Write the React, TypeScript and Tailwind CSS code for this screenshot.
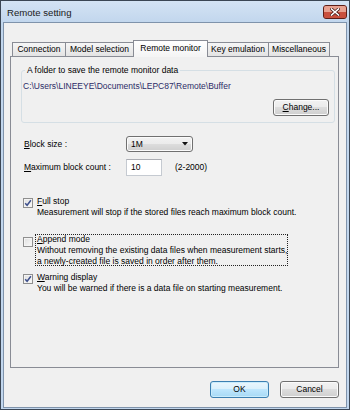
import React from "react";

function CloseButton() {
  return (
    <div className="ml-auto mt-[4px] w-[24px] h-[14px] rounded-[3px] border border-[#5e1f18] bg-[#cd5644] overflow-hidden flex flex-col relative">
      <div className="h-[6px] bg-[#e8a190]" />
      <div className="flex-1 bg-[#c9503e]" />
      <svg className="absolute left-[6px] top-[2px]" width="10" height="8" viewBox="0 0 10 8">
        <path d="M1.5 1 L8.5 7 M8.5 1 L1.5 7" stroke="#4a1d18" strokeWidth="3" strokeLinecap="square" />
        <path d="M1.5 1 L8.5 7 M8.5 1 L1.5 7" stroke="#ffffff" strokeWidth="1.6" strokeLinecap="square" />
      </svg>
    </div>
  );
}

function Tab({ label, w, selected, first }: { label: string; w: string; selected?: boolean; first?: boolean }) {
  return (
    <div
      className={[
        "flex items-center justify-center border-l border-t border-r border-[#898c95] whitespace-nowrap",
        w,
        first ? "" : "-ml-[1px]",
        selected
          ? "h-[17px] -mb-[1px] relative z-10 bg-[linear-gradient(#ffffff,#f4f4f4)] pb-[2px]"
          : "h-[14px] bg-[linear-gradient(#f6f6f6,#e3e3e3)]",
      ].join(" ")}
    >
      {label}
    </div>
  );
}

function CheckBox({ checked }: { checked?: boolean }) {
  return (
    <div className="mt-[3px] w-[10px] h-[10px] shrink-0 border border-[#8f8f8f] bg-[linear-gradient(135deg,#dedede,#fafafa)] shadow-[inset_0_0_0_1px_#f4f4f4] flex items-center justify-center">
      {checked && (
        <svg width="8" height="8" viewBox="0 0 8 8">
          <path d="M1.2 4.2 L3.1 6.3 L6.9 1.3" fill="none" stroke="#3d4f8c" strokeWidth="1.5" />
        </svg>
      )}
    </div>
  );
}

const btnGray =
  "flex items-center justify-center rounded-[3px] border border-[#707070] bg-[linear-gradient(#f2f2f2_0%,#ebebeb_50%,#dddddd_50%,#cfcfcf_100%)] shadow-[inset_0_0_0_1px_#fbfbfb]";

export default function App() {
  return (
    <div className="w-[350px] h-[410px] flex flex-col border border-[#3b4654] bg-[linear-gradient(#d4e3f4_0px,#c1d6ed_22px,#c1d6ed_100%)] font-['Liberation_Sans',Arial,sans-serif] text-[8.5px] leading-[11px] text-black whitespace-nowrap">
      {/* Title bar */}
      <div className="h-[21px] flex items-start pl-[6px] pr-[2px] shrink-0">
        <span className="mt-[6px] text-[9.6px] leading-[11px] text-[#1a1a1a]">Remote setting</span>
        <CloseButton />
      </div>

      {/* Client area */}
      <div className="flex-1 mx-[2px] mb-[1px] border border-[#7f93ab] bg-[#f0f0f0] flex flex-col pt-[17px] pl-[6px] pr-[7px] pb-[9px]">
        {/* Tabs */}
        <div className="h-[16px] flex items-end pl-[2px] shrink-0">
          <Tab label="Connection" w="w-[54px]" first />
          <Tab label="Model selection" w="w-[69px]" />
          <Tab label="Remote monitor" w="w-[75px]" selected />
          <Tab label="Key emulation" w="w-[62px]" />
          <Tab label="Miscellaneous" w="w-[62px]" />
        </div>

        {/* Tab pane */}
        <div className="flex-1 border border-[#898c95] bg-[#f0f0f0] pt-[8px] pl-[10px] pr-[3px] flex flex-col">
          <fieldset className="border border-[#d5dfe5] rounded-[3px] pl-[1px] pr-[5px] pb-[6px]">
            <legend className="ml-[2px] px-[2px] leading-[11px]">A folder to save the remote monitor data</legend>
            <div className="flex flex-col">
              <div className="mt-[5px] text-[#2b2b66]">C:\Users\LINEEYE\Documents\LEPC87\Remote\Buffer</div>
              <div className={btnGray + " self-end mt-[7px] w-[56px] h-[17px]"}>
                <span>
                  <span className="underline">C</span>hange...
                </span>
              </div>
            </div>
          </fieldset>

          {/* Block size */}
          <div className="mt-[13px] flex items-center h-[16px]">
            <div className="ml-[3px] w-[102px]">
              <span className="underline">B</span>lock size :
            </div>
            <div className="w-[67px] h-[16px] rounded-[3px] border border-[#707070] bg-[linear-gradient(#f2f2f2_0%,#ebebeb_50%,#dddddd_50%,#cfcfcf_100%)] shadow-[inset_0_0_0_1px_#fbfbfb] flex items-center pl-[4px] pr-[4px]">
              <span>1M</span>
              <svg className="ml-auto" width="6" height="4" viewBox="0 0 6 4">
                <polygon points="0,0 6,0 3,3.5" fill="#111" />
              </svg>
            </div>
          </div>

          {/* Maximum block count */}
          <div className="mt-[7px] flex items-center h-[17px]">
            <div className="ml-[3px] w-[102px]">
              <span className="underline">M</span>aximum block count :
            </div>
            <div className="w-[36px] h-[17px] bg-white border border-[#c5cad1] border-t-[#abadb3] flex items-center pl-[4px]">10</div>
            <div className="ml-[13px]">(2-2000)</div>
          </div>

          {/* Full stop */}
          <div className="mt-[19px] flex items-start ml-[2px]">
            <CheckBox checked />
            <div className="ml-[2px] border border-transparent px-[1px]">
              <div>
                <span className="underline">F</span>ull stop
              </div>
              <div>Measurement will stop if the stored files reach maximum block count.</div>
            </div>
          </div>

          {/* Append mode */}
          <div className="mt-[15px] flex items-start ml-[2px]">
            <CheckBox />
            <div className="ml-[2px] w-[253px] h-[32px] border border-dotted border-[#222] px-[1px]">
              <div className="-mt-[1px]">
                <div>
                  <span className="underline">A</span>ppend mode
                </div>
                <div>Without removing the existing data files when measurement starts,</div>
                <div>a newly-created file is saved in order after them.</div>
              </div>
            </div>
          </div>

          {/* Warning display */}
          <div className="mt-[5px] flex items-start ml-[2px]">
            <CheckBox checked />
            <div className="ml-[2px] border border-transparent px-[1px]">
              <div>
                <span className="underline">W</span>arning display
              </div>
              <div>You will be warned if there is a data file on starting measurement.</div>
            </div>
          </div>
        </div>

        {/* Buttons */}
        <div className="mt-[13px] flex justify-end gap-[11px] shrink-0">
          <div className="w-[59px] h-[17px] flex items-center justify-center rounded-[3px] border border-[#3c7fb1] bg-[linear-gradient(#eaf6fd_0%,#d9f0fc_50%,#bee6fd_50%,#a7d9f5_100%)] shadow-[inset_0_0_0_1px_#c9ecfc]">
            OK
          </div>
          <div className={btnGray + " w-[59px] h-[17px]"}>Cancel</div>
        </div>
      </div>
    </div>
  );
}
